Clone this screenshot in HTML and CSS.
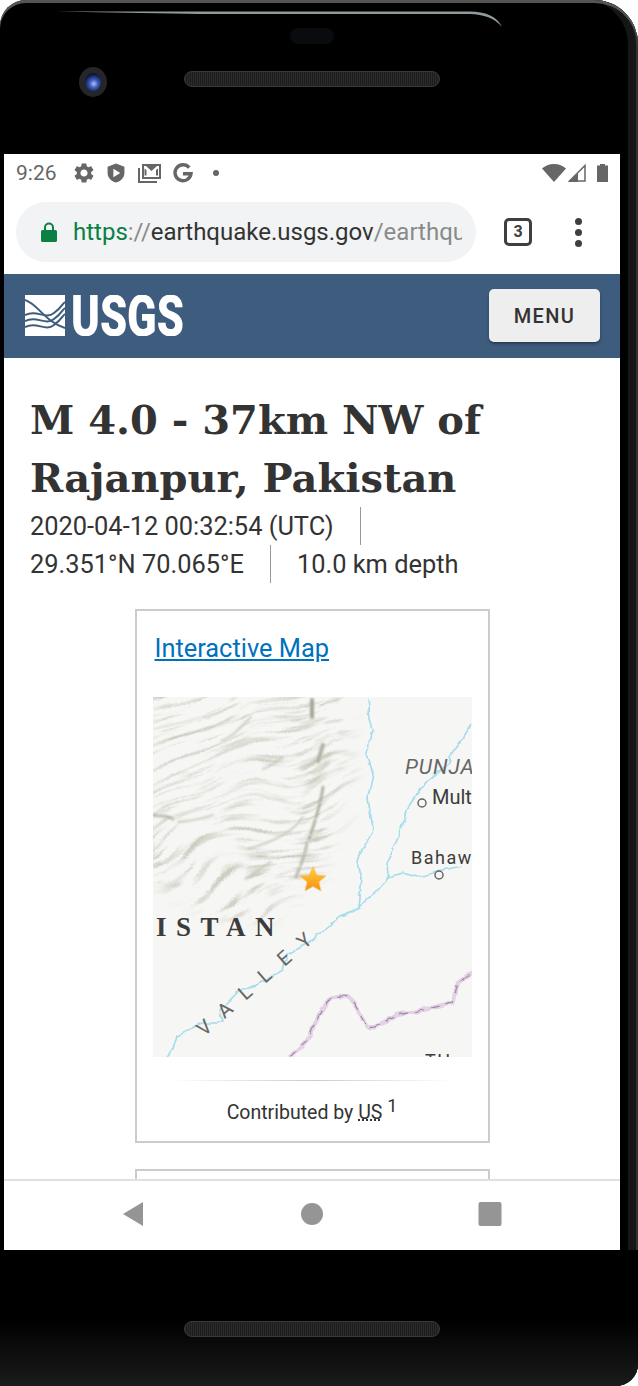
FILE: index.html
```html
<!DOCTYPE html>
<html lang="en">
<head>
    <meta charset="UTF-8">
    <meta name="viewport" content="width=device-width, initial-scale=1.0">
    <title>M 4.0 - 37km NW of Rajanpur, Pakistan</title>
    <link rel="stylesheet" href="styles.css">
</head>
<body>
    <div class="phone">
        <svg class="gleam" width="638" height="40" viewBox="0 0 638 40">
            <path d="M55 11.500H470C485 11.500 497 16 502 27C495 18 483 14.500 470 14H200Z" fill="#8f9c9e"/>
        </svg>

        <div class="bezel-top">
            <div class="sensor"></div>
            <div class="speaker"></div>
            <div class="camera"><div class="lens"></div></div>
        </div>

        <div class="screen">
            <div class="status-bar">
                <span class="time">9:26</span>
                <svg class="st-icon st-gear" width="24" height="24" viewBox="0 0 24 24"><path fill="#666" d="M19.14 12.94c.04-.3.06-.61.06-.94 0-.32-.02-.64-.07-.94l2.03-1.58a.49.49 0 0 0 .12-.61l-1.92-3.32a.488.488 0 0 0-.59-.22l-2.39.96c-.5-.38-1.03-.7-1.62-.94l-.36-2.54a.484.484 0 0 0-.48-.41h-3.84c-.24 0-.43.17-.47.41l-.36 2.54c-.59.24-1.13.57-1.62.94l-2.39-.96c-.22-.08-.47 0-.59.22L2.74 8.87c-.12.21-.08.47.12.61l2.03 1.58c-.05.3-.09.63-.09.94s.02.64.07.94l-2.03 1.58a.49.49 0 0 0-.12.61l1.92 3.32c.12.22.37.29.59.22l2.39-.96c.5.38 1.03.7 1.62.94l.36 2.54c.05.24.24.41.48.41h3.84c.24 0 .44-.17.47-.41l.36-2.54c.59-.24 1.13-.56 1.62-.94l2.39.96c.22.08.47 0 .59-.22l1.92-3.32c.12-.22.07-.47-.12-.61l-2.01-1.58zM12 15.6c-1.98 0-3.6-1.62-3.6-3.6s1.62-3.6 3.6-3.6 3.6 1.62 3.6 3.6-1.62 3.6-3.6 3.6z"/></svg>
                <svg class="st-icon" width="20" height="20" viewBox="1 0.500 18 19"><path fill="#666" fill-rule="evenodd" d="M10 1l8 3v6c0 4.500-3.400 8-8 9-4.600-1-8-4.500-8-9V4zM7.500 6v8l6.500-4z"/></svg>
                <svg class="st-icon" width="23" height="20" viewBox="0 0 23 20"><path fill="#666" fill-rule="evenodd" d="M4 1h19v15H4zM6 3v11h15V3h-2l-5.500 5L8 3zM6.500 5.500v7h2V7zM20 5.500v7h-2V7zM0 5h2v13h17v2H0z"/></svg>
                <svg class="st-icon" width="20" height="20" viewBox="0 0 20 20"><path fill="none" stroke="#666" stroke-width="3.400" d="M16.200 4.600A8 8 0 1 0 18 10.800H10"/></svg>
                <span class="st-dot"></span>
                <span class="st-right">
                    <svg width="24" height="18" viewBox="0 0 24 18"><path fill="#666" d="M0 4.500C3 1.800 7 0 12 0s9 1.800 12 4.500L12 18z"/></svg>
                    <svg width="19" height="18" viewBox="0 0 19 18"><path fill="#fff" stroke="#666" stroke-width="1.500" d="M18 1.500V17H2.500z"/><path fill="#666" d="M11 9v9H1.500z"/></svg>
                    <svg class="battery" width="11" height="18" viewBox="0 0 11 18"><path fill="#666" d="M3 0h5v1.500h3V18H0V1.500h3z"/></svg>
                </span>
            </div>

            <div class="toolbar">
                <div class="url-pill">
                    <svg width="16" height="20" viewBox="0 0 16 20"><path fill="#0b8043" d="M3 8V5.500a5 5 0 0 1 10 0V8h1.500A1.500 1.500 0 0 1 16 9.500v9a1.500 1.500 0 0 1-1.500 1.500h-13A1.500 1.500 0 0 1 0 18.500v-9A1.500 1.500 0 0 1 1.500 8zM5 8h6V5.500a3 3 0 0 0-6 0z"/></svg>
                    <div class="url"><span class="url-scheme">https</span><span class="url-dim">://</span>earthquake.usgs.gov<span class="url-dim">/earthquakes</span></div>
                </div>
                <div class="tab-count">3</div>
                <div class="kebab"><i></i><i></i><i></i></div>
            </div>

            <header class="site-header">
                <svg class="logo" width="160" height="41" viewBox="0 0 160 41">
                    <rect width="40" height="41" fill="#fff"/>
                    <g fill="none" stroke="#3e5c7e" stroke-width="2">
                        <path d="M0 5C13 9 20 27 40 33"/>
                        <path d="M0 20C12 14 20 25 29 18S37 9 40 7"/>
                        <path d="M0 26C12 20 20 31 29 24S37 15 40 13"/>
                        <path d="M0 32C12 26 20 37 29 30S37 21 40 19"/>
                    </g>
                    <text class="logo-text" x="46" y="40.500" textLength="113" lengthAdjust="spacingAndGlyphs">USGS</text>
                </svg>
                <button class="menu-btn">MENU</button>
            </header>

            <main class="content">
                <h1>M 4.0 - 37km NW of Rajanpur, Pakistan</h1>
                <ul class="meta">
                    <li>2020-04-12 00:32:54 (UTC)</li>
                    <li>29.351°N 70.065°E</li>
                    <li>10.0 km depth</li>
                </ul>

                <section class="card">
                    <a class="card-link" href="#">Interactive Map</a>
                    <svg class="map" width="319" height="360" viewBox="0 0 319 360">
                        <defs>
                            <linearGradient id="starFill" x1="0" y1="0" x2="0" y2="1">
                                <stop offset="0" stop-color="#ffd23e"/>
                                <stop offset="1" stop-color="#f78f12"/>
                            </linearGradient>
                            <filter id="soft"><feGaussianBlur stdDeviation="0.8"/></filter>
                            <filter id="wide"><feGaussianBlur stdDeviation="9"/></filter>
                            <filter id="ridges" x="0" y="0" width="100%" height="100%">
                                <feTurbulence type="fractalNoise" baseFrequency="0.007" numOctaves="2" seed="11" result="warp"/>
                                <feTurbulence type="fractalNoise" baseFrequency="0.02 0.17" numOctaves="3" seed="7"/>
                                <feColorMatrix values="0 0 0 0 0.6  0 0 0 0 0.6  0 0 0 0 0.53  2.6 2.6 0 0 -2.62" result="lines"/>
                                <feDisplacementMap in="lines" in2="warp" scale="90" xChannelSelector="R" yChannelSelector="G"/>
                                <feGaussianBlur stdDeviation="0.45"/>
                            </filter>
                            <filter id="wiggle" x="-5%" y="-5%" width="110%" height="110%">
                                <feTurbulence type="fractalNoise" baseFrequency="0.09" numOctaves="2" seed="3"/>
                                <feDisplacementMap in="SourceGraphic" scale="6" xChannelSelector="R" yChannelSelector="G"/>
                            </filter>
                            <mask id="hills">
                                <path d="M-20 -20H190C198 40 205 90 188 125C175 170 150 205 120 222C70 232 30 200 -20 170Z" fill="#fff" filter="url(#wide)"/>
                            </mask>
                        </defs>
                        <rect width="319" height="360" fill="#f6f6f4"/>
                        <!-- hill shading -->
                        <g mask="url(#hills)">
                            <rect x="-120" y="-120" width="560" height="560" fill="#fff" filter="url(#ridges)" transform="rotate(-18 160 180)"/>
                        </g>
                        <g fill="none" stroke-linecap="round" filter="url(#soft)">
                            <path d="M159 3V20" stroke-width="4" stroke="#a5a596"/>
                            <path d="M170 48L165 64" stroke-width="4" stroke="#b0b0a2"/>
                            <path d="M170 90C168 105 162 125 156 142" stroke-width="2.600" stroke="#aaaa9b" stroke-dasharray="14 3"/>
                            <path d="M154 146C152 158 148 168 142 182" stroke-width="2.600" stroke="#b5b5a7" stroke-dasharray="10 3"/>
                            <path d="M68 44C80 40 90 28 98 20" stroke="#c4c4b7" stroke-width="1.600"/>
                            <path d="M130 60C122 66 116 70 110 72" stroke="#c4c4b7" stroke-width="1.600"/>
                            <path d="M0 118C8 120 14 118 20 122" stroke="#b5b5a8" stroke-width="2.500"/>
                            <path d="M25 125C35 124 50 122 60 118" stroke="#c4c4b7" stroke-width="1.800"/>
                            <path d="M150 120C140 135 120 145 95 152" stroke="#c4c4b7" stroke-width="1.600"/>
                            <path d="M118 165C105 172 100 178 92 182" stroke="#c4c4b7" stroke-width="1.600"/>
                        </g>
                        <!-- rivers -->
                        <g filter="url(#wiggle)">
                            <g fill="none" stroke="#a6dcec" stroke-width="1.700" stroke-linejoin="round">
                                <path d="M215 1L217 23L220 33L214 56L220 76L215 100L220 133L204 163L209 180L206 210"/>
                                <path d="M319 26L299 56L297 66L274 83L257 106L247 136L234 166L235 180L224 193L206 210L184 221L164 240L134 258L130 273L107 286L84 296L67 313L70 326L50 326L24 338L20 353L14 359"/>
                                <path d="M235 180L250 176L264 180L285 175L309 170"/>
                            </g>
                            <!-- border -->
                            <path d="M137 360L154 343L167 316C172 305 178 299 190 299C200 299 205 312 210 323C214 330 218 331 222 330L244 318L270 313L300 306L305 286L319 275" fill="none" stroke="#e2d2e4" stroke-width="4.500"/>
                            <path d="M137 360L154 343L167 316C172 305 178 299 190 299C200 299 205 312 210 323C214 330 218 331 222 330L244 318L270 313L300 306L305 286L319 275" fill="none" stroke="#9e86a8" stroke-width="1.200" stroke-dasharray="9 7"/>
                        </g>
                        <!-- labels -->
                        <text class="map-label map-italic" x="252" y="77">PUNJAB</text>
                        <text class="map-label" x="279" y="107">Multan</text>
                        <text class="map-label map-small" x="258" y="167">Bahawalpur</text>
                        <circle cx="269" cy="106" r="4" fill="#f6f6f4" stroke="#666" stroke-width="1.500"/>
                        <circle cx="286" cy="178" r="4" fill="#f6f6f4" stroke="#666" stroke-width="1.500"/>
                        <text class="map-label map-serif" x="3" y="239">ISTAN</text>
                        <text class="map-label map-valley" transform="translate(51 340) rotate(-41)">VALLEY</text>
                        <text class="map-label map-small" x="272" y="370" letter-spacing="5">TH</text>
                        <!-- epicentre -->
                        <path d="M160 169.500L163.800 178L173 179L166 185L168 194L160 189.500L152 194L154 185L147 179L156.200 178Z" fill="url(#starFill)" stroke="#f3c97a" stroke-width="0.800"/>
                    </svg>
                    <hr class="card-rule">
                    <p class="card-foot">Contributed by <abbr>US</abbr> <sup>1</sup></p>
                </section>
                <section class="card"></section>
            </main>

            <nav class="nav-bar">
                <svg width="24" height="24" viewBox="0 0 24 24"><path fill="#959595" d="M22 0V24L2 12Z"/></svg>
                <svg width="24" height="24" viewBox="0 0 24 24"><circle cx="12" cy="12" r="11" fill="#959595"/></svg>
                <svg width="24" height="24" viewBox="0 0 24 24"><rect x="0.500" y="0" width="23" height="24" rx="2" fill="#959595"/></svg>
            </nav>
        </div>

        <div class="bezel-bottom">
            <div class="speaker"></div>
        </div>
    </div>
</body>
</html>
```

FILE: styles.css
```css
* {
    box-sizing: border-box;
}
body {
    margin: 0;
    background: #fff;
    font-family: Roboto, Arial, sans-serif;
}
.phone {
    position: relative;
    width: 638px;
    height: 1386px;
    overflow: hidden;
    padding: 0 18px 0 4px;
    background: #000;
    border-radius: 26px 44px 22px 0;
    box-shadow: inset 0 3px 0 #555, inset -2px 0 0 #333, inset -10px 0 0 #161616;
}
.gleam {
    position: absolute;
    top: 0;
    left: 0;
}

/* hardware */
.bezel-top {
    position: relative;
    height: 154px;
    padding-top: 28px;
    display: flex;
    flex-direction: column;
    align-items: center;
}
.sensor {
    width: 44px;
    height: 16px;
    margin-bottom: 27px;
    border-radius: 8px;
    background: #0a0b0e;
}
.speaker {
    width: 256px;
    height: 16px;
    border-radius: 8px;
    border: 1.5px solid #3a3a3a;
    background: repeating-linear-gradient(90deg, #2c2c2a 0, #2c2c2a 1px, #1c1c1b 1px, #1c1c1b 2px);
}
.camera {
    position: absolute;
    left: 75px;
    top: 67px;
    width: 28px;
    height: 30px;
    border-radius: 50%;
    background: #25262a;
    display: flex;
    align-items: center;
    justify-content: center;
}
.lens {
    width: 16px;
    height: 18px;
    border-radius: 50%;
    background: radial-gradient(circle at 55% 60%, #a9c0f5 0, #3c5bc0 30%, #0c1330 70%);
}
.bezel-bottom {
    height: 136px;
    padding-top: 71px;
    margin: 0 -18px 0 -4px;
    padding-right: 14px;
    display: flex;
    justify-content: center;
    align-items: flex-start;
    background: linear-gradient(#000 50%, #1b1b1b 100%);
}

/* screen */
.screen {
    height: 1096px;
    background: #fff;
    display: flex;
    flex-direction: column;
}
.status-bar {
    height: 38px;
    flex: none;
    padding: 0 12px;
    display: flex;
    align-items: center;
    color: #666;
}
.time {
    width: 58px;
    font-size: 21px;
}
.st-icon {
    margin-right: 12px;
}
.st-gear {
    margin-left: -2px;
    margin-right: 10px;
}
.st-dot {
    width: 6px;
    height: 6px;
    margin-left: 8px;
    border-radius: 50%;
    background: #666;
}
.st-right {
    margin-left: auto;
    display: flex;
    align-items: center;
    gap: 1px;
}
.battery {
    margin-left: 10px;
}
.toolbar {
    height: 82px;
    flex: none;
    padding: 10px 0 12px 12px;
    display: flex;
    align-items: center;
}
.url-pill {
    width: 460px;
    height: 60px;
    padding: 0 14px 0 25px;
    border-radius: 30px;
    background: #f1f3f4;
    display: flex;
    align-items: center;
    gap: 16px;
}
.url-pill svg {
    flex: none;
}
.url {
    overflow: hidden;
    white-space: nowrap;
    font-size: 24px;
    color: #333;
}
.url-scheme {
    color: #0b8043;
}
.url-dim {
    color: #8a8a8a;
}
.tab-count {
    width: 28px;
    height: 28px;
    margin-left: 28px;
    border: 3px solid #3c4043;
    border-radius: 5px;
    font-size: 16px;
    font-weight: 700;
    line-height: 22px;
    text-align: center;
    color: #3c4043;
}
.kebab {
    margin-left: 43px;
    display: flex;
    flex-direction: column;
    gap: 4px;
}
.kebab i {
    width: 7px;
    height: 7px;
    border-radius: 50%;
    background: #3c4043;
}
.site-header {
    height: 84px;
    flex: none;
    padding: 0 20px 1px 21px;
    background: #3e5c7e;
    display: flex;
    align-items: center;
    justify-content: space-between;
}
.logo-text {
    font-family: Roboto, sans-serif;
    font-weight: 900;
    font-size: 57px;
    fill: #fff;
}
.menu-btn {
    width: 111px;
    height: 53px;
    padding: 0;
    border: none;
    border-radius: 5px;
    background: #eee;
    box-shadow: 0 2px 3px rgba(0, 0, 0, 0.35);
    font-family: Roboto, sans-serif;
    font-size: 20px;
    font-weight: 500;
    letter-spacing: 1.4px;
    color: #333;
}

/* page */
.content {
    flex: 1;
    min-height: 0;
    overflow: hidden;
    padding: 33px 26px 0;
    color: #333;
}
h1 {
    margin: 0;
    font-family: "DejaVu Serif", "Liberation Serif", serif;
    font-size: 40px;
    font-weight: 700;
    line-height: 58px;
    color: #333;
}
.meta {
    margin: 0;
    padding: 0;
    list-style: none;
    display: flex;
    flex-wrap: wrap;
    font-size: 25.4px;
    line-height: 38px;
}
.meta li {
    padding-right: 26px;
    margin-right: 26px;
    border-right: 1px solid #999;
}
.meta li:last-child {
    border-right: none;
}
.card {
    width: 355px;
    margin: 26px auto 0;
    padding: 19px 16px 0;
    border: 2px solid #ccc;
}
.card:first-of-type {
    height: 534px;
}
.card-link {
    display: block;
    padding-left: 2px;
    margin-bottom: 31px;
    font-size: 25.4px;
    line-height: 36px;
    color: #0071bc;
}
.map {
    display: block;
}
.map-label {
    font-family: Roboto, sans-serif;
    font-size: 20px;
    fill: #3c3c3c;
}
.map-italic {
    font-style: italic;
    font-size: 21px;
    letter-spacing: 1px;
    fill: #666;
}
.map-small {
    font-size: 18px;
    letter-spacing: 1.5px;
}
.map-serif {
    font-family: "Liberation Serif", serif;
    font-size: 27px;
    font-weight: 700;
    letter-spacing: 9.5px;
}
.map-valley {
    font-size: 20px;
    letter-spacing: 15px;
    fill: #666;
}
.card-rule {
    height: 1px;
    margin: 23px 0 0;
    border: none;
    background: linear-gradient(90deg, transparent 5%, #ccc 50%, transparent 95%);
}
.card-foot {
    margin: 20px 0 0;
    font-size: 19.5px;
    line-height: 24px;
    text-align: center;
    color: #333;
}
.card-foot abbr {
    text-decoration: underline dotted #333;
}
.card-foot sup {
    font-size: 18px;
    line-height: 0;
}
.nav-bar {
    height: 71px;
    flex: none;
    padding: 0 0 4px 117px;
    border-top: 2px solid #e0e0e0;
    margin-top: -1px;
    display: flex;
    align-items: center;
    gap: 154.5px;
}
```
